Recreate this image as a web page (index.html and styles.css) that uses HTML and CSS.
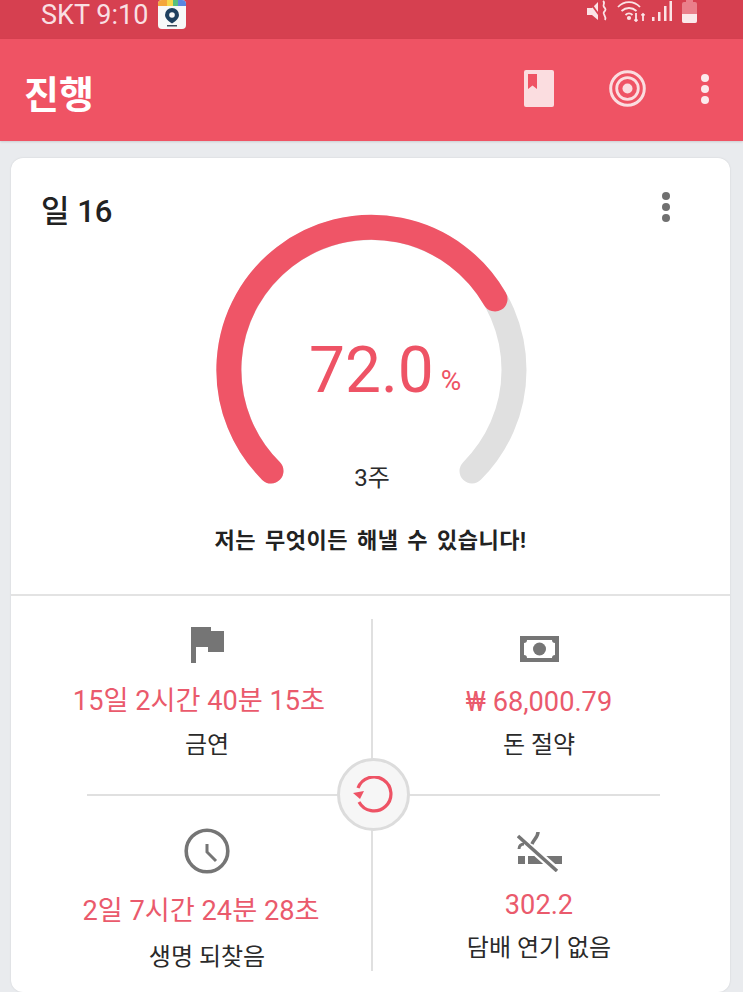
FILE: index.html
```html
<!DOCTYPE html>
<html lang="ko">
<head>
<meta charset="utf-8">
<title>진행</title>
<link rel="stylesheet" href="styles.css">
</head>
<body>
<div class="statusbar">
  <div class="status-left">
    <span class="carrier">SKT 9:10</span>
    <svg class="appicon" width="28" height="29" viewBox="0 0 28 29">
      <rect x="0" y="0" width="28" height="29" rx="4" fill="#f7f8f8"/>
      <path d="M0 6V4a4 4 0 0 1 4-4h5v6z" fill="#f4a63c"/>
      <rect x="9" y="0" width="6" height="6" fill="#f6d84a"/>
      <rect x="15" y="0" width="5" height="6" fill="#57c07c"/>
      <path d="M20 0h4a4 4 0 0 1 4 4v2h-8z" fill="#5a86e0"/>
      <path d="M14 8a7 7 0 0 0-7 7c0 4.500 7 8.500 7 8.500s7-4 7-8.500a7 7 0 0 0-7-7z" fill="#1d3f5e"/>
      <circle cx="14" cy="15" r="2.800" fill="#f7f8f8"/>
      <rect x="9" y="25" width="10" height="1.500" fill="#3d4d5c"/>
    </svg>
  </div>
  <div class="status-right">
    <svg class="st-mute" width="22" height="22" viewBox="0 0 22 22">
      <path d="M1 8h5l6-6v18l-6-5H1z" fill="#fbe3e6"/>
      <path d="M3 1l13 18" stroke="#d64050" stroke-width="1.800"/>
      <path d="M17 1c3 2-1 4 1 6s2 3 0 5 3 4 1 8" stroke="#fbe3e6" stroke-width="1.800" fill="none"/>
    </svg>
    <svg class="st-wifi" width="30" height="22" viewBox="0 0 30 22" fill="none" stroke="#fbe3e6" stroke-width="1.800">
      <path d="M1 7c6-6.500 16-6.500 22 0"/>
      <path d="M4.500 11c4.500-4 10.500-4 15 0"/>
      <path d="M8.500 15c2-2 5-2 7 0"/>
      <circle cx="12" cy="18" r="1.200" fill="#fbe3e6"/>
      <path d="M19 13v8M17.500 19.500l1.500 1.500 1.500-1.500M26 21v-7M24.500 15.500l1.500-1.500 1.500 1.500"/>
    </svg>
    <svg class="st-signal" width="20" height="22" viewBox="0 0 20 22" fill="#fbe3e6">
      <rect x="0" y="17" width="2.500" height="4"/>
      <rect x="6" y="12" width="2.500" height="9"/>
      <rect x="12" y="6" width="2.500" height="15"/>
      <rect x="17.500" y="1" width="2.500" height="20"/>
    </svg>
    <svg class="st-battery" width="15" height="23" viewBox="0 0 15 23">
      <path d="M4 0h7v2h2a2 2 0 0 1 2 2v17a2 2 0 0 1-2 2H2a2 2 0 0 1-2-2V4a2 2 0 0 1 2-2h2z" fill="#ea7f8b"/>
      <path d="M0 14h15v7a2 2 0 0 1-2 2H2a2 2 0 0 1-2-2z" fill="#fbe9eb"/>
    </svg>
  </div>
</div>

<header class="appbar">
  <h1 class="appbar-title">진행</h1>
  <div class="appbar-actions">
    <svg width="30" height="37" viewBox="0 0 30 37">
      <path d="M2 0h26a2 2 0 0 1 2 2v33a2 2 0 0 1-2 2H2a2 2 0 0 1-2-2V2a2 2 0 0 1 2-2z" fill="#fbdde0"/>
      <path d="M4 4h9v15l-4.500-3.500L4 19z" fill="#ef5364"/>
    </svg>
    <svg class="target" width="37" height="37" viewBox="0 0 37 37" fill="none" stroke="#fbdde0">
      <circle cx="18.500" cy="18.500" r="16.800" stroke-width="3"/>
      <circle cx="18.500" cy="18.500" r="10.800" stroke-width="2.800"/>
      <circle cx="18.500" cy="18.500" r="5" fill="#fbdde0" stroke="none"/>
    </svg>
    <div class="dots dots-light"><i></i><i></i><i></i></div>
  </div>
</header>

<main class="card">
  <div class="card-head">
    <span class="day">일 16</span>
    <div class="dots dots-grey"><i></i><i></i><i></i></div>
  </div>

  <div class="gauge">
    <svg class="gauge-arc" width="312" height="274" viewBox="0 0 312 274" fill="none" stroke-width="25" stroke-linecap="round">
      <path d="M56 257A142.500 142.500 0 1 1 257 257" stroke="#e0e0e0"/>
      <path d="M56 257A142.500 142.500 0 1 1 280 85" stroke="#ef5567"/>
    </svg>
    <div class="gauge-value"><span class="pct">72.0</span><span class="pct-unit">%</span></div>
    <div class="gauge-week">3주</div>
  </div>

  <p class="motto">저는 무엇이든 해낼 수 있습니다!</p>

  <section class="stats">
    <div class="cell cell-a">
      <svg class="icon" width="33" height="36" viewBox="0 0 33 36" fill="#757575">
        <path d="M0 0H20V4H33V25H17V20H5V36H0Z"/>
      </svg>
      <div class="value">15일 2시간 40분 15초</div>
      <div class="label">금연</div>
    </div>
    <div class="cell cell-b">
      <svg class="icon" width="39" height="26" viewBox="0 0 39 26">
        <rect width="39" height="26" fill="#757575"/>
        <path d="M7 4h25a3 3 0 0 0 3 3v12a3 3 0 0 0-3 3H7a3 3 0 0 0-3-3V7a3 3 0 0 0 3-3z" fill="#fff"/>
        <circle cx="19.500" cy="13" r="6.500" fill="#757575"/>
      </svg>
      <div class="value">₩ 68,000.79</div>
      <div class="label">돈 절약</div>
    </div>
    <div class="cell cell-c">
      <svg class="icon" width="46" height="46" viewBox="0 0 46 46" fill="none" stroke="#757575">
        <circle cx="23" cy="23" r="20.800" stroke-width="3.600"/>
        <path d="M23 16V24L32 33" stroke-width="3"/>
      </svg>
      <div class="value">2일 7시간 24분 28초</div>
      <div class="label">생명 되찾음</div>
    </div>
    <div class="cell cell-d">
      <svg class="icon" width="45" height="41" viewBox="0 0 45 41">
        <path d="M1 25h7v8H1zM11 25h34v8H11z" fill="#757575"/>
        <path d="M1 5L40 40" stroke="#fff" stroke-width="8"/>
        <path d="M1 5L40 40" stroke="#757575" stroke-width="3.500"/>
        <path d="M21 1C21 6 17 8 15 13" fill="none" stroke="#757575" stroke-width="3.500"/>
        <path d="M2 18c0-3 2-5 5-5" fill="none" stroke="#757575" stroke-width="3"/>
      </svg>
      <div class="value">302.2</div>
      <div class="label">담배 연기 없음</div>
    </div>

    <span class="line-v"></span>
    <span class="line-h"></span>
    <button class="reset" type="button" aria-label="reset">
      <svg width="42" height="38" viewBox="0 0 42 38" fill="none">
        <path d="M5 12A17 17 0 1 1 6 26" stroke="#ee5365" stroke-width="3.200"/>
        <path d="M0 17L11 15L7 23z" fill="#ee5365"/>
      </svg>
    </button>
  </section>
</main>
</body>
</html>
```
FILE: styles.css
```css
* { box-sizing: border-box; }
html, body { margin: 0; padding: 0; }
body {
  width: 743px;
  height: 992px;
  overflow: hidden;
  background: #e9ebee;
  font-family: Roboto, "Noto Sans CJK KR", sans-serif;
  color: #222;
}

.statusbar {
  height: 39px;
  background: #d64050;
  display: flex;
  justify-content: space-between;
  padding: 0 46px 0 41px;
}
.status-left { display: flex; align-items: flex-start; gap: 10px; height: 30px; }
.carrier { font-size: 27px; line-height: 30px; color: #f9dfe2; }
.status-right { display: flex; align-items: flex-start; }
.st-mute { margin-right: 9px; }
.st-wifi { margin-right: 5px; }
.st-signal { margin-right: 10px; }

.appbar {
  height: 102px;
  background: #ef5364;
  display: flex;
  align-items: center;
  justify-content: space-between;
  padding: 0 34px 0 24px;
  box-shadow: 0 1px 2px rgba(0,0,0,0.12);
}
.appbar-title { margin: 9px 0 0; font-size: 38px; line-height: 46px; font-weight: 700; color: #fff; }
.appbar-actions { display: flex; align-items: center; margin-bottom: 3px; }
.target { margin-left: 55px; margin-right: 55px; }

.dots { display: flex; flex-direction: column; flex: none; gap: 3px; width: 8px; height: 30px; }
.dots i { display: block; flex: none; width: 8px; height: 8px; border-radius: 50%; }
.dots-light i { background: #fcebed; }
.dots-grey i { background: #707070; }

.card {
  position: relative;
  margin: 17px 13px 0 11px;
  height: 834px;
  background: #fff;
  border-radius: 12px;
  box-shadow: 0 0 2px rgba(0,0,0,0.12);
}
.card-head {
  display: flex;
  justify-content: space-between;
  align-items: flex-start;
  padding: 34px 60px 0 30px;
  height: 56px;
}
.day { font-size: 31px; line-height: 40px; font-weight: 500; color: #222; }

.gauge {
  position: relative;
  width: 312px;
  height: 274px;
  margin-left: 204px;
}
.gauge-arc { display: block; }
.gauge-value {
  position: absolute;
  left: 94px;
  top: 117px;
  display: flex;
  align-items: baseline;
  color: #ee5365;
}
.pct { font-size: 64px; line-height: 80px; }
.pct-unit { font-size: 28px; margin-left: 7px; position: relative; top: -2px; }
.gauge-week {
  position: absolute;
  left: 2px;
  right: 0;
  top: 248px;
  text-align: center;
  font-size: 24px;
  line-height: 32px;
  color: #2b2b2b;
}

.motto {
  margin: 38px 0 0;
  text-align: center;
  font-size: 22px;
  line-height: 30px;
  font-weight: 700;
  letter-spacing: 0.5px;
  word-spacing: 3px;
  color: #222;
}

.stats {
  position: relative;
  margin-top: 38px;
  height: 398px;
  border-top: 2px solid #e3e3e3;
  display: grid;
  grid-template-columns: 361px 1fr;
  grid-template-rows: 201px 1fr;
  text-align: center;
}
.cell { display: flex; flex-direction: column; align-items: center; }
.cell-a { padding: 31px 0 0 31px; }
.cell-b { padding: 40px 24px 0 0; }
.cell-c { padding: 31px 0 0 31px; }
.cell-d { padding: 34px 24px 0 0; }
.icon { display: block; flex: none; }
.value { font-size: 27.2px; line-height: 34px; color: #ea5a6c; white-space: nowrap; }
.label { font-size: 24px; line-height: 30px; color: #2a2a2a; white-space: nowrap; }
.cell-a .value { margin: 21px 0 0 -16px; }
.cell-a .label { margin-top: 12px; }
.cell-b .value { margin-top: 23px; }
.cell-b .label { margin-top: 11px; }
.cell-c .value { margin: 20px 0 0 -12px; }
.cell-c .label { margin-top: 14px; }
.cell-d .value { margin-top: 16px; }
.cell-d .label { margin-top: 11px; }

.line-v {
  position: absolute;
  left: 360px;
  top: 23px;
  width: 2px;
  height: 352px;
  background: #e0e0e0;
}
.line-h {
  position: absolute;
  left: 76px;
  top: 198px;
  width: 573px;
  height: 2px;
  background: #e0e0e0;
}
.reset {
  position: absolute;
  left: 326px;
  top: 162px;
  width: 73px;
  height: 73px;
  padding: 0;
  border: 3px solid #dcdcdc;
  border-radius: 50%;
  background: #f6f6f6;
  display: flex;
  align-items: center;
  justify-content: center;
}
```
